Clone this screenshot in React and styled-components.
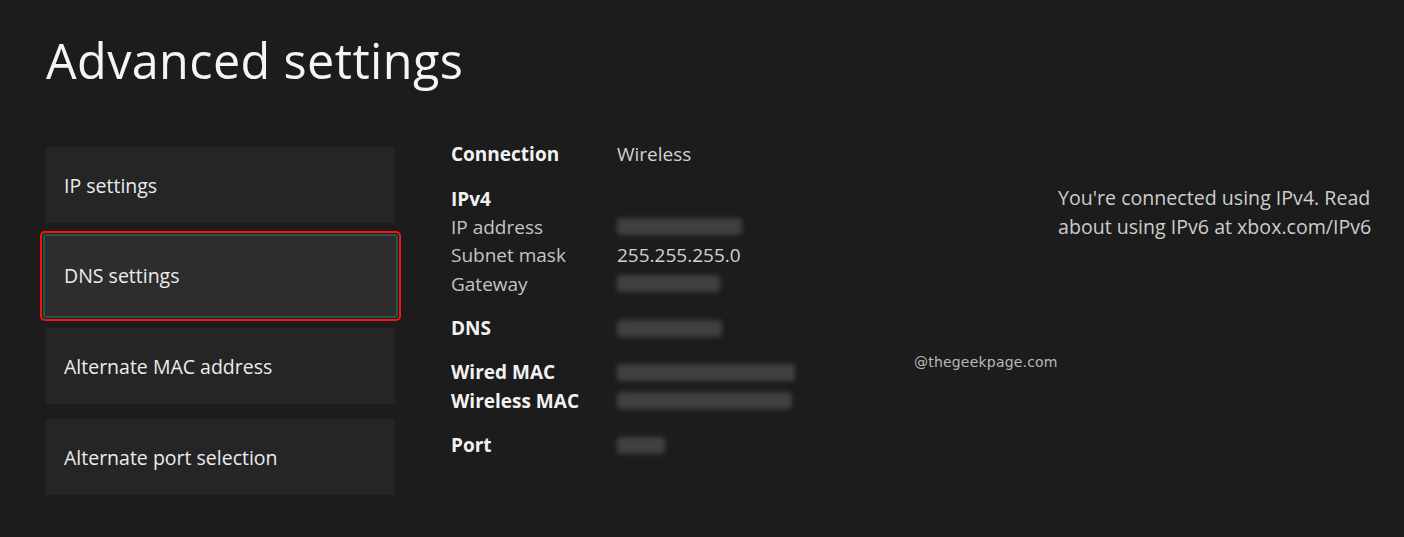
import styled, { createGlobalStyle } from "styled-components";

const GlobalStyle = createGlobalStyle`
	html, body {
		margin: 0;
		padding: 0;
		background: #1c1c1c;
	}
	body {
		font-family: "Open Sans", "Noto Sans", sans-serif;
		color: #e8e8e8;
	}
`;

const menuItems = [
	{ label: "IP settings" },
	{ label: "DNS settings", focused: true },
	{ label: "Alternate MAC address" },
	{ label: "Alternate port selection" },
];

const groups = [
	[{ label: "Connection", strong: true, value: "Wireless" }],
	[
		{ label: "IPv4", strong: true },
		{ label: "IP address", blur: 125 },
		{ label: "Subnet mask", value: "255.255.255.0" },
		{ label: "Gateway", blur: 103 },
	],
	[{ label: "DNS", strong: true, blur: 105 }],
	[
		{ label: "Wired MAC", strong: true, blur: 178 },
		{ label: "Wireless MAC", strong: true, blur: 175 },
	],
	[{ label: "Port", strong: true, blur: 48 }],
];

const App = () => {
	return (
		<Page>
			<GlobalStyle />
			<Title>Advanced settings</Title>
			<Main>
				<Menu>
					{menuItems.map((item) => (
						<MenuItem key={item.label} $focused={item.focused}>
							{item.label}
						</MenuItem>
					))}
				</Menu>
				<Details>
					{groups.map((group, i) => (
						<Group key={i}>
							{group.map((row) => (
								<Row key={row.label}>
									<Label $strong={row.strong}>{row.label}</Label>
									{row.value && <Value>{row.value}</Value>}
									{row.blur && <Blurred style={{ width: row.blur }} />}
								</Row>
							))}
						</Group>
					))}
				</Details>
				<Info>
					You're connected using IPv4. Read
					<br />
					about using IPv6 at xbox.com/IPv6
				</Info>
			</Main>
			<Watermark>@thegeekpage.com</Watermark>
		</Page>
	);
};

export default App;

const Page = styled.div`
	position: relative;
	width: 1404px;
	height: 537px;
	overflow: hidden;
	background: #1c1c1c;
	padding: 23px 0 0 46px;
	box-sizing: border-box;
`;

const Title = styled.h1`
	margin: 0;
	font-family: "Open Sans", "Noto Sans", sans-serif;
	font-weight: 400;
	font-size: 48.5px;
	line-height: 74px;
	color: #f4f4f4;
	letter-spacing: 0.4px;
`;

const Main = styled.div`
	display: flex;
	align-items: flex-start;
	margin-top: 49px;
`;

const Menu = styled.div`
	display: flex;
	flex-direction: column;
	gap: 14.7px;
	width: 349px;
	margin-top: 1px;
`;

const MenuItem = styled.div`
	position: relative;
	height: 76px;
	display: flex;
	align-items: center;
	padding-left: 18px;
	background: ${(p) => (p.$focused ? "#2d2d2d" : "#252525")};
	font-size: 19.5px;
	color: #ececec;
	${(p) =>
		p.$focused &&
		`
		height: 84px;
		margin: -4px -3px;
		padding-left: 19px;
		border: 2px solid #1f5a49;
		border-radius: 2px;
		box-sizing: border-box;
		outline: 2px solid #ff1010;
		outline-offset: 1px;
	`}
`;

const Details = styled.div`
	display: flex;
	flex-direction: column;
	gap: 16.2px;
	margin-left: 56px;
	margin-top: -6px;
	width: 607px;
`;

const Group = styled.div`
	display: flex;
	flex-direction: column;
`;

const Row = styled.div`
	display: flex;
	align-items: center;
	height: 28.3px;
`;

const Label = styled.div`
	width: 166px;
	flex-shrink: 0;
	font-size: 19px;
	font-weight: ${(p) => (p.$strong ? 700 : 400)};
	color: ${(p) => (p.$strong ? "#f2f2f2" : "#c4c4c4")};
`;

const Value = styled.div`
	font-size: 19px;
	color: #d2d2d2;
`;

const Blurred = styled.div`
	height: 17px;
	border-radius: 4px;
	background: #404040;
	filter: blur(2.5px);
`;

const Info = styled.div`
	margin-top: 37px;
	font-size: 19.6px;
	line-height: 29px;
	color: #cdcdcd;
	white-space: nowrap;
`;

const Watermark = styled.div`
	position: absolute;
	left: 914px;
	top: 354px;
	font-family: "DejaVu Sans", sans-serif;
	font-size: 14px;
	color: #b8b8b8;
	letter-spacing: 0.2px;
`;
